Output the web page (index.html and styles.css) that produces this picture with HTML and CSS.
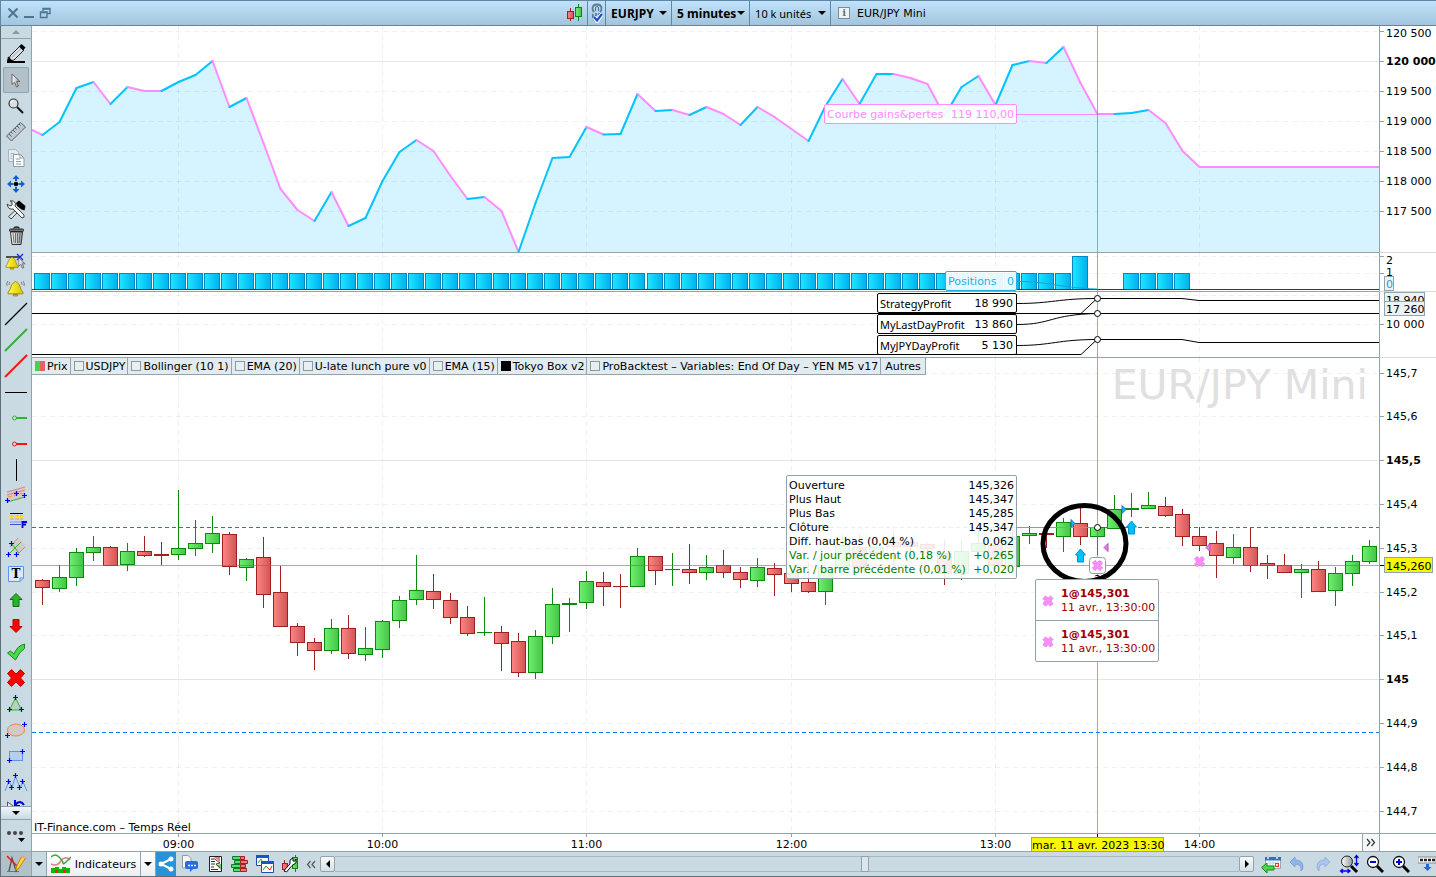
FILE: index.html
```html
<!DOCTYPE html>
<html lang="fr">
<head>
  <meta charset="UTF-8" />
  <title>EUR/JPY Mini - 5 minutes</title>
  <link rel="stylesheet" href="styles.css">
</head>
<body>

<svg class="defs" width="0" height="0">
  <defs>
    <linearGradient id="gUp"><stop offset="0" stop-color="#70f070"/><stop offset="1" stop-color="#44c444"/></linearGradient>
    <linearGradient id="gDown"><stop offset="0" stop-color="#ff8484"/><stop offset="1" stop-color="#d05656"/></linearGradient>
    <linearGradient id="gPos"><stop offset="0" stop-color="#1ee6ff"/><stop offset="1" stop-color="#00b0ee"/></linearGradient>
    <linearGradient id="gGold"><stop offset="0" stop-color="#fff94a"/><stop offset="1" stop-color="#e0c400"/></linearGradient>
    <linearGradient id="gMetal"><stop offset="0" stop-color="#ffffff"/><stop offset="1" stop-color="#8f979b"/></linearGradient>
    <symbol id="cross" viewBox="0 0 12 12"><path d="M3.5.8 6 3 8.5.8l2.7 2.7L9 6l2.2 2.5-2.7 2.7L6 9l-2.5 2.2L.8 8.5 3 6 .8 3.5z" fill="#ff8cff" stroke="#c77fd0" stroke-dasharray="1 1"/></symbol>
    <symbol id="plus" viewBox="0 0 5 5"><path d="M2.5 0v5M0 2.5h5" stroke="#00e" stroke-width="1.2"/></symbol>
    <symbol id="bell" viewBox="0 0 16 16"><path d="M6.5 2.5Q8 0 9.5 2.5C13 4 12 9 15 11.5v1.5H1v-1.5C4 9 3 4 6.5 2.5z" fill="url(#gGold)" stroke="#8f7c10" stroke-width=".8"/><path d="M6 13.5h4v1.5H6z" fill="#e0c000" stroke="#7d6a00" stroke-width=".6"/></symbol>
    <symbol id="pointer" viewBox="0 0 10 15"><path d="M1 1v10.5l2.5-2.3L5.5 14l2-1-2-4.5h3.5z" fill="url(#gMetal)" stroke="#666"/></symbol>
  </defs>
</svg>

<header class="titlebar">
  <div class="window-controls">
    <button aria-label="Fermer"><svg width="12" height="12"><path d="M1.5 1.5l9 9M10.5 1.5l-9 9" /></svg></button>
    <button aria-label="Réduire"><svg width="12" height="12"><path d="M1 10h10" /></svg></button>
    <button aria-label="Restaurer"><svg width="12" height="12"><path class="thin" d="M4 4V1.5h7v5H8.5M1.5 5h6.5v5.5H1.5zM1.5 5.5h6.5M4 2h7" /></svg></button>
  </div>
  <div class="title-tools">
    <button class="tool-candle" aria-label="Style du graphique">
      <svg width="16" height="18"><path d="M3.5 4v13" stroke="#a02020"/><rect x=".5" y="7.5" width="6" height="7" fill="url(#gDown)" stroke="#a02020"/><path d="M11.5 0v17" stroke="#0a8a0a"/><rect x="8.5" y="3.5" width="6" height="9" fill="url(#gUp)" stroke="#0a8a0a"/></svg>
    </button>
    <button class="tool-link" aria-label="Synchroniser">
      <svg width="12" height="20"><path d="M4.5 8V5q0-1.5 1.5-1.5T7.5 5v3" fill="none" stroke="#4d7086"/><path d="M3 9Q1.5 7.5 1.5 5 2 1.5 6 1.5t4.5 3.5Q10.5 7.5 9 9" fill="none" stroke="#5d7c90" stroke-width="1.8"/><path d="M2 11q-1 5 3 7M5 10v3M8 10v2" fill="none" stroke="#5d7c90" stroke-width="1.8"/><path d="M3 14l3 4 5-7" fill="none" stroke="#fff" stroke-width="4"/><path d="M3 14l3 3.5 5-6.5" fill="none" stroke="#1550d8" stroke-width="2.2"/></svg>
    </button>
    <label class="pick pick-symbol"><select aria-label="Instrument"><option>EURJPY</option></select></label>
    <label class="pick pick-period"><select aria-label="Unité de temps"><option>5 minutes</option></select></label>
    <label class="pick pick-units"><select aria-label="Unités"><option>10 k unités</option></select></label>
    <button class="tool-info"><span class="info-icon">i</span>EUR/JPY Mini</button>
  </div>
</header>

<main class="workspace">
  <nav class="sidebar">
    <button class="scroll-up" aria-label="Défiler vers le haut"><svg width="8" height="4"><path d="M0 4 4 0l4 4z" fill="#8d999f"/></svg></button>
    <div class="tools">
      <button aria-label="Crayon"><svg viewBox="0 0 26 26"><path d="M7 15 17 5l4 4-10 10-5 1z" fill="#dce6ea" stroke="#222"/><path d="M9 16.5 18.5 7" stroke="#888" stroke-width=".8"/><path d="M16 5.5 18.5 3l4 3.5L20 9.5z"/><path d="M5 15.5 10 20H4z"/><path d="M4 20h18v2H4z"/></svg></button>
      <button class="active" aria-label="Curseur"><svg viewBox="0 0 26 26"><use href="#pointer" x="8" y="6" width="10" height="15"/></svg></button>
      <button aria-label="Zoom"><svg viewBox="0 0 26 26"><path d="M14 14l6 6" stroke="#111" stroke-width="2"/><circle cx="10.5" cy="10.5" r="4.5" fill="#d5dfe4" stroke="#333" stroke-width="1.2"/><path d="M8 10q.5-2.5 3-2.5" fill="none" stroke="#fff"/></svg></button>
      <button aria-label="Règle"><svg viewBox="0 0 26 26"><path d="M3.5 17 17.5 3.5l5 4.5L8.5 22z" fill="#c0c8d2" stroke="#556069"/><path d="M6 15l2.5 2.5M8 13l1.5 1.5M10 11l2.5 2.5M12 9l1.5 1.5M14 7l2.5 2.5M16 5l1.5 1.5" stroke="#556069"/></svg></button>
      <button aria-label="Copier"><svg viewBox="0 0 26 26"><path d="M5.5 4.5h7l3 3v9h-10z" fill="#e3edf1" stroke="#a5b6bf"/><path d="M7.5 8.5h4M7.5 11h2M7.5 13.5h2" stroke="#a5b6bf"/><path d="M10.5 9.5h7l3.5 3.5v8.5H10.5z" fill="#fff" stroke="#8d9ca4"/><path d="M17 9.5v3.5h4M13 14h4M13 16.5h5M13 19h5" fill="none" stroke="#8d9ca4"/></svg></button>
      <button aria-label="Déplacer"><svg viewBox="0 0 26 26"><circle cx="13" cy="13" r="2.2"/><path d="M13 4l3.5 4H14v2h-2V8H9.5zM13 22l3.5-4H14v-2h-2v2H9.5zM4 13l4-3.5V12h2.5v2H8v2.5zM22 13l-4-3.5V12h-2.5v2H18v2.5z" fill="#1260d0"/></svg></button>
      <button aria-label="Outils"><svg viewBox="0 0 26 26"><path d="M14 12 5.5 19.5l2.5 2.5L16 14z" fill="#dfe5e8" stroke="#444"/><path d="M13 6l3-2.5 6.5 5.5-1 4.5-3-1L14 9z"/><path d="M4 7l3 2 2-1V5L7 4q4-1 5.5 2.5L12 9l9 9q1 3-2 3L10 12q-5 1-6-5z" fill="#f2f4f5" stroke="#444"/></svg></button>
      <button aria-label="Supprimer"><svg viewBox="0 0 26 26"><path d="M7.5 9h12l-1.5 12.5H9z" fill="url(#gMetal)" stroke="#333"/><path d="M10 10l1 10M12.5 10v10M14.5 10v10M17 10l-1 10" stroke="#555" stroke-width=".8"/><rect x="6.5" y="6" width="14" height="2.5" rx="1" fill="#777" stroke="#222"/><path d="M11 5.5q0-1.5 2.5-1.5t2.5 1.5" fill="none" stroke="#222" stroke-width="1.3"/></svg></button>
      <button aria-label="Alerte sur ligne"><svg viewBox="0 0 26 26"><path d="M3 8h14" stroke="#000" stroke-width="1.3"/><use href="#bell" x="2" y="7" width="14" height="14"/><path d="M14 5l6 6M20 5l-6 6" stroke="#22e" stroke-width="1.3"/><use href="#pointer" x="15" y="8" width="8" height="12"/></svg></button>
      <button aria-label="Alertes"><svg viewBox="0 0 26 26"><use href="#bell" x="4" y="5" width="17" height="17"/><path d="M5 6q-2 2-1 5M7 7q-1 1-1 3M20 6q2 2 1 5M18 7q1 1 1 3" fill="none" stroke="#666" stroke-width=".8"/></svg></button>
      <button aria-label="Ligne"><svg viewBox="0 0 26 26"><path d="M2 24 24 2" stroke="#000" stroke-width="1.2"/></svg></button>
      <button aria-label="Ligne verte"><svg viewBox="0 0 26 26"><path d="M2 24 24 2" stroke="#2fb42f" stroke-width="2"/></svg></button>
      <button aria-label="Ligne rouge"><svg viewBox="0 0 26 26"><path d="M2 24 24 2" stroke="#f11" stroke-width="2"/></svg></button>
      <button aria-label="Ligne horizontale"><svg viewBox="0 0 26 26"><path d="M2 13.5h22" stroke="#000"/></svg></button>
      <button aria-label="Segment vert"><svg viewBox="0 0 26 26"><path d="M13 13h11" stroke="#2fb42f" stroke-width="2"/><circle cx="11.5" cy="13" r="2" fill="none" stroke="#2fb42f"/></svg></button>
      <button aria-label="Segment rouge"><svg viewBox="0 0 26 26"><path d="M13 13h11" stroke="#f11" stroke-width="2"/><circle cx="11.5" cy="13" r="2" fill="none" stroke="#f11"/></svg></button>
      <button aria-label="Ligne verticale"><svg viewBox="0 0 26 26"><path d="M13.5 2v22" stroke="#000"/></svg></button>
      <button aria-label="Canal"><svg viewBox="0 0 26 26"><path d="M4 9 22 4v10L4 19z" fill="#d5c9cc"/><path d="M4 9 22 4M4 12l18-5" stroke="#e07f88" fill="none"/><path d="M5 14l16-4" stroke="#ff8c3c" stroke-dasharray="4 2"/><path d="M4 19l18-5" stroke="#2fb42f"/><use href="#plus" x="2" y="15" width="5" height="5"/><use href="#plus" x="11" y="8" width="5" height="5"/><use href="#plus" x="19" y="10" width="5" height="5"/></svg></button>
      <button aria-label="Fibonacci"><svg viewBox="0 0 26 26"><path d="M7 4.5h13" stroke="#000"/><path d="M7 7h13" stroke="#ffd800" stroke-width="2" stroke-dasharray="4 1"/><path d="M7 10h13" stroke="#ff9c3c" stroke-dasharray="4 1"/><path d="M7 13h13" stroke="#9fb6ff" stroke-width="2"/><path d="M7 15.5h11" stroke="#3c50d0"/><path d="M19.5 19v-6H24M19.5 15.5H23" fill="none" stroke="#00c" stroke-width="1.8"/></svg></button>
      <button aria-label="Fourchette"><svg viewBox="0 0 26 26"><path d="M7 12 16 3l7 8-9 9z" fill="#d5c9cc"/><path d="M7 12l8-9M14 20l8-8" stroke="#e07f88"/><path d="M6 19 18 7M9 9l7 9" stroke="#2fb42f"/><use href="#plus" x="6" y="6" width="5" height="5"/><use href="#plus" x="3" y="17" width="5" height="5"/><use href="#plus" x="11" y="17" width="5" height="5"/></svg></button>
      <button class="text-tool" aria-label="Texte"><svg viewBox="0 0 26 26"><path d="M5.5 5.5h15v11.5l-3.5 3.5H5.5z" fill="#dbe8ff" stroke="#5c93f5"/><path d="M17 20.5V17h3.5" fill="none" stroke="#5c93f5"/><text x="13" y="17" text-anchor="middle">T</text></svg></button>
      <button aria-label="Flèche haut"><svg viewBox="0 0 26 26"><path d="M13 6.5l6 6h-3v7h-6v-7H7z" fill="#28b428" stroke="#0b720b"/></svg></button>
      <button aria-label="Flèche bas"><svg viewBox="0 0 26 26"><path d="M13 19.5l6-6h-3v-7h-6v7H7z" fill="#f00" stroke="#b00"/></svg></button>
      <button aria-label="Valider"><svg viewBox="0 0 26 26"><path d="M4.5 14l3-2 3.5 3q3-8 10.5-10v4.5Q16 13 12.5 21z" fill="#4cd64c" stroke="#178a17"/></svg></button>
      <button aria-label="Croix"><svg viewBox="0 0 26 26"><path d="M8.5 4.5 13 9l4.5-4.5 4 4L17.5 13l4 4.5-4 4L13 17l-4.5 4.5-4-4L8.5 13l-4-4.5z" fill="#f00" stroke="#b00"/></svg></button>
      <button aria-label="Triangle"><svg viewBox="0 0 26 26"><path d="M12.5 7l6 12h-12z" fill="#b9d0c4" stroke="#2fb42f"/><use href="#plus" x="10" y="4" width="5" height="5"/><use href="#plus" x="4" y="16" width="5" height="5"/><use href="#plus" x="16" y="16" width="5" height="5"/></svg></button>
      <button aria-label="Ellipse"><svg viewBox="0 0 26 26"><ellipse cx="13" cy="13" rx="8.5" ry="6" fill="#d3cac5" stroke="#ff8040"/><use href="#plus" x="19" y="5" width="5" height="5"/><use href="#plus" x="2" y="16" width="5" height="5"/></svg></button>
      <button aria-label="Rectangle"><svg viewBox="0 0 26 26"><rect x="6.5" y="8.5" width="13" height="9" fill="#b7cfec" stroke="#5c93f5"/><use href="#plus" x="17" y="6" width="5" height="5"/><use href="#plus" x="4" y="15" width="5" height="5"/></svg></button>
      <button aria-label="Vagues"><svg viewBox="0 0 26 26"><path d="M2 22 6 12l3 7 3.5-12L17 19l3-6 4 9" fill="none" stroke="#5c93f5"/><use href="#plus" x="3" y="10" width="5" height="5"/><use href="#plus" x="6" y="16" width="5" height="5"/><use href="#plus" x="10" y="4" width="5" height="5"/><use href="#plus" x="14" y="16" width="5" height="5"/><use href="#plus" x="17" y="10" width="5" height="5"/></svg></button>
      <button aria-label="Annuler dessin"><svg viewBox="0 0 26 26"><path d="M4.5 7v10l7-5z" fill="#eee" stroke="#555"/><path d="M12 5v6h5M12 10q5-6 9 0" fill="none" stroke="#00d" stroke-width="2"/></svg></button>
    </div>
    <button class="scroll-down" aria-label="Défiler vers le bas"><i class="caret"></i></button>
    <button class="more" aria-label="Plus d'outils"><svg width="20" height="14"><circle cx="3" cy="4" r="2"/><circle cx="9" cy="4" r="2"/><circle cx="15" cy="4" r="2"/><path d="M12 9h7l-3.5 4z" fill="#000"/></svg></button>
  </nav>

  <section class="charts">
    <div class="panel panel-equity">
      <svg class="plot" id="equity"></svg>
      <svg class="axis" id="equityAxis"></svg>
      <div class="hint hint-equity"><span>Courbe gains&amp;pertes</span><span>119 110,00</span></div>
    </div>
    <div class="panel panel-positions">
      <svg class="plot" id="positions"></svg>
      <svg class="axis" id="positionsAxis"></svg>
      <div class="hint hint-positions"><span>Positions</span><span>0</span></div>
    </div>
    <div class="panel panel-vars">
      <svg class="plot" id="vars"></svg>
      <svg class="axis" id="varsAxis"></svg>
      <div class="var-hints">
        <div class="hint"><span class="name">StrategyProfit</span><span>18 990</span></div>
        <div class="hint"><span class="name">MyLastDayProfit</span><span>13 860</span></div>
        <div class="hint"><span class="name">MyJPYDayProfit</span><span>5 130</span></div>
      </div>
    </div>
    <div class="panel panel-price">
      <svg class="plot" id="price"></svg>
      <svg class="axis" id="priceAxis"></svg>
      <div class="watermark">EUR/JPY Mini</div>
      <div class="indicators">
        <label><input type="checkbox" class="swatch-price" checked>Prix</label>
        <label><input type="checkbox">USDJPY</label>
        <label><input type="checkbox">Bollinger (10 1)</label>
        <label><input type="checkbox">EMA (20)</label>
        <label><input type="checkbox">U-late lunch pure v0</label>
        <label><input type="checkbox">EMA (15)</label>
        <label><input type="checkbox" checked>Tokyo Box v2</label>
        <label><input type="checkbox">ProBacktest – Variables: End Of Day – YEN M5 v17</label>
        <button>Autres</button>
      </div>
      <table class="bar-info">
        <tr><th>Ouverture</th><td>145,326</td></tr>
        <tr><th>Plus Haut</th><td>145,347</td></tr>
        <tr><th>Plus Bas</th><td>145,285</td></tr>
        <tr><th>Clôture</th><td>145,347</td></tr>
        <tr><th>Diff. haut-bas (0,04 %)</th><td>0,062</td></tr>
        <tr class="gain"><th>Var. / jour précédent (0,18 %)</th><td>+0,265</td></tr>
        <tr class="gain"><th>Var. / barre précédente (0,01 %)</th><td>+0,020</td></tr>
      </table>
      <ul class="orders">
        <li><svg width="12" height="12"><use href="#cross"/></svg><p><b>1@145,301</b><br>11 avr., 13:30:00</p></li>
        <li><svg width="12" height="12"><use href="#cross"/></svg><p><b>1@145,301</b><br>11 avr., 13:30:00</p></li>
      </ul>
      <div class="source">IT-Finance.com – Temps Réel</div>
    </div>
    <div class="panel panel-time">
      <svg class="plot" id="time"></svg>
      <button class="go-end" aria-label="Aller à la fin"><svg width="10" height="9"><path d="M1 1l3 3.5L1 8M5.5 1l3 3.5L5.5 8" fill="none" stroke="#333" stroke-width="1.2"/></svg></button>
      <div class="axis"></div>
      <div class="time-cursor">mar. 11 avr. 2023 13:30</div>
    </div>
  </section>
</main>

<footer class="bottombar">
  <button class="draw-mode" aria-label="Dessin"><svg width="20" height="20"><path d="M1 17.5h12" stroke="#2a2"/><path d="M3 17 6 4l4 13 3-8" fill="none" stroke="#4a5358" stroke-width="1.3"/><path d="M1 2l11 11" stroke="#f11" stroke-width="1.5"/><path d="M9.5 16.5l1-4L16 2l3.5 2-6.5 10z" fill="#ffd84a" stroke="#b98600"/><path d="M15 3l1-1.5 3.5 2L18.5 5z" fill="#f9a0a0"/></svg></button>
  <button class="drop" aria-label="Options de dessin"><i class="caret"></i></button>
  <button class="indicator-btn"><svg width="20" height="20"><path d="M0 10Q6 13 10 7t9-1" fill="none" stroke="#e08080" stroke-width="1.5"/><path d="M0 3Q4-1 8 3t4 6 3-1 5-5" fill="none" stroke="#3aa84a" stroke-width="1.5"/><path d="M0 19v-5h4v-1h4v2h3v-2h4v1h4v5z" fill="#0b0"/><path d="M4 19v-3h3v3zM12 19v-3h3v3z" fill="#e22"/></svg>Indicateurs</button>
  <button class="drop drop-light" aria-label="Options d'indicateurs"><i class="caret"></i></button>
  <button class="share" aria-label="Partager"><svg width="16" height="16"><path d="M13 3 3 8l10 5" fill="none" stroke="#fff" stroke-width="2"/><circle cx="13" cy="3" r="2.5" fill="#fff"/><circle cx="3" cy="8" r="2.5" fill="#fff"/><circle cx="13" cy="13" r="2.5" fill="#fff"/></svg></button>
  <div class="bottom-tools">
    <button aria-label="Messages"><svg width="18" height="18"><path d="M1.5.5H7l3 3V13H1.5z" fill="#f4f7f9" stroke="#8d9ca4"/><path d="M6 6h9q2 0 2 2v4q0 2-2 2h-3l-3 3v-3H6q-2 0-2-2V8q0-2 2-2z" fill="#2a6ae0"/><path d="M7 10.5h2M10 10.5h2M13 10.5h2" stroke="#fff" stroke-width="1.5"/></svg></button>
    <button aria-label="Rapport"><svg width="18" height="18"><path d="M3.5 1.5h12v15h-12z" fill="#fff" stroke="#222"/><path d="M5 4h3M5 6.5h4M5 9h4M5 12h3M5 14.5h7" stroke="#333"/><path d="M8 2h6v5z" fill="#e77"/><path d="M15 9v6l-5-5z" fill="#6c6"/><path d="M8 3.5l6 4.5-4 1 4 4" fill="none" stroke="#444"/></svg></button>
    <button aria-label="Carnet"><svg width="18" height="18"><path d="M1.5 1.5h8v3h-8zM3.5 5.5h6v3h-6zM.5 9.5h9v3h-9zM2.5 13.5h7v3h-7z" fill="#4fe070" stroke="#137a2a"/><path d="M9.5 1.5h4v3h-4zM9.5 5.5h7v3h-7zM9.5 9.5h5v3h-5zM9.5 13.5h6v3h-6z" fill="#ef7777" stroke="#a02020"/></svg></button>
    <button aria-label="Fenêtres"><svg width="18" height="18"><path d="M.5.5h12v10H.5z" fill="#fff" stroke="#1a4fb0"/><path d="M0 0h13v3H0z" fill="#1a55c8"/><path d="M2 8l3-4 2 4" fill="none" stroke="#2a2"/><path d="M5.5 6.5h12v11h-12z" fill="#fff" stroke="#1a4fb0"/><path d="M5 6h13v3H5z" fill="#1a55c8"/><path d="M7 15l3-4 2 2" fill="none" stroke="#2a2"/><path d="M12 13l2 2 2-4" fill="none" stroke="#e22"/></svg></button>
    <button aria-label="Réglages du graphique"><svg width="18" height="18"><path d="M3.5 5v12" stroke="#a02020"/><path d="M14.5 0v17" stroke="#0a8a0a"/><rect x="1.5" y="8.5" width="5" height="6" fill="url(#gDown)" stroke="#a02020"/><rect x="11.5" y="2.5" width="5" height="11" fill="url(#gUp)" stroke="#0a8a0a"/><path d="M3 15.5 9 9V5l3-2v3h2l1-2v4l-4 2.5L5.5 17z" fill="#fff" stroke="#111"/></svg></button>
    <button class="collapse" aria-label="Replier"><svg width="10" height="9"><path d="M4.5 1 1.5 4.5l3 3.5M9 1 6 4.5 9 8" fill="none" stroke="#555" stroke-width="1.2"/></svg></button>
  </div>
  <div class="scrollbar">
    <button aria-label="Reculer"><svg width="4" height="8"><path d="M4 0v8L0 4z"/></svg></button>
    <input type="range" min="0" max="1000" value="587" aria-label="Position dans l'historique">
    <button aria-label="Avancer"><svg width="4" height="8"><path d="M0 0v8l4-4z"/></svg></button>
  </div>
  <div class="zoom-tools">
    <button aria-label="Date"><svg width="20" height="20"><path d="M4.5 4.5h15v10h-15z" fill="#fff" stroke="#9aa"/><path d="M4 3h16v3.5H4z" fill="#2878b8"/><path d="M7 1v4M16 1v4" stroke="#ccc" stroke-width="2"/><path d="M7 9h11M7 12h11M9 7v7M12 7v7M17 7v7" stroke="#ccd"/><rect x="14.5" y="9.5" width="3" height="3" fill="none" stroke="#e33"/><path d="M.5 13.5 6 9v3h7v4H6v3z" fill="#4cd64c" stroke="#178a17"/></svg></button>
    <button aria-label="Annuler"><svg width="16" height="16"><path d="M1 6l5-5v3q8 0 8 7 0 2-2 4 1-7-6-7v3z" fill="#8fb6ea" stroke="#7da3d8"/></svg></button>
    <button aria-label="Rétablir"><svg width="16" height="16"><path d="M15 6l-5-5v3Q2 4 2 11q0 2 2 4-1-7 6-7v3z" fill="#a9c6ee" stroke="#93b2de"/></svg></button>
    <button aria-label="Zoom auto"><svg width="20" height="20"><path d="M12 12l6 6" stroke="#000" stroke-width="3"/><circle cx="8" cy="7.5" r="5.5" fill="url(#gMetal)" stroke="#222"/><path d="M17.5 2v8M15.5 4l2-2.5 2 2.5M15.5 9l2 2.5 2-2.5M2 17h8M4 15l-2.5 2L4 19M8.5 15l2.5 2-2.5 2" fill="none" stroke="#00e" stroke-width="1.3"/></svg></button>
    <button aria-label="Zoom arrière"><svg width="18" height="18"><path d="M11 11l6 6" stroke="#000" stroke-width="3"/><circle cx="7" cy="7" r="5.5" fill="#fff" stroke="#111" stroke-width="1.3"/><path d="M4 7h6" stroke="#00d" stroke-width="2"/></svg></button>
    <button aria-label="Zoom avant"><svg width="18" height="18"><path d="M11 11l6 6" stroke="#000" stroke-width="3"/><circle cx="7" cy="7" r="5.5" fill="#fff" stroke="#111" stroke-width="1.3"/><path d="M4 7h6M7 4v6" stroke="#00d" stroke-width="2"/></svg></button>
    <button aria-label="Espacement"><svg width="18" height="16"><path d="M0 1h18v6H0z" fill="#fff" stroke="#888"/><path d="M2 4h16" stroke="#222" stroke-width="2.5" stroke-dasharray="3 1"/><path d="M8 8h3v3h2.5l-4 4-4-4H8z" fill="#2468d8"/></svg></button>
  </div>
</footer>

<script src="script.js"></script>
</body>
</html>
```

FILE: styles.css
```css
* {
  box-sizing: border-box;
}

body {
  display: flex;
  flex-direction: column;
  height: 100vh;
  margin: 0;
  overflow: hidden;
  background: #fff;
  color: #000;
  font-family: "DejaVu Sans", Verdana, sans-serif;
  font-size: 11px;
}

button, select, input {
  margin: 0;
  padding: 0;
  border: 0;
  background: none;
  color: inherit;
  font: inherit;
}

button {
  display: flex;
  align-items: center;
  justify-content: center;
}

svg {
  display: block;
  flex: none;
}

.defs {
  position: absolute;
}

.caret {
  border: 4px solid transparent;
  border-top-color: #000;
  border-bottom: 0;
}

/* title bar */
.titlebar {
  display: flex;
  flex: none;
  height: 26px;
  border: 1px solid #5d87a3;
  border-right: 0;
  background: linear-gradient(#c0e2fc, #a2c5dd);
}

.window-controls {
  display: flex;
  align-items: center;
  gap: 4px;
  padding-left: 6px;
}

.window-controls path {
  fill: none;
  stroke: #4d7690;
  stroke-width: 2;
}

.window-controls .thin {
  stroke-width: 1.4;
}

.title-tools {
  display: flex;
  margin: 0 auto;
  padding-left: 8px;
}

.title-tools > * {
  flex: none;
  border-right: 1px solid #5d87a3;
}

.tool-candle {
  width: 26px;
}

.tool-link {
  width: 18px;
}

.pick {
  display: flex;
  align-items: center;
  justify-content: space-between;
  padding: 0 4px 0 5px;
}

.pick select {
  appearance: none;
}

.pick::after {
  content: "";
  border: 4px solid transparent;
  border-top-color: #000;
  border-bottom: 0;
}

.pick-symbol { width: 66px; }
.pick-period { width: 78px; }
.pick-units { width: 81px; }

.pick-symbol, .pick-period {
  font-family: "Noto Sans", sans-serif;
  font-size: 12px;
  font-weight: bold;
}

.title-tools .tool-info {
  gap: 7px;
  padding: 0 7px;
  border: 0;
}

.info-icon {
  width: 12px;
  height: 12px;
  border: 1px solid #7d8d96;
  background: #eef3f6;
  color: #65747c;
  font: bold 10px/10px "DejaVu Serif", serif;
}

/* narrower face where the box is tight */
.pick-units,
.var-hints .name {
  font-family: "Noto Sans", "DejaVu Sans", sans-serif;
}

/* drawing tools */
.workspace {
  display: flex;
  flex: 1;
  min-height: 0;
}

.sidebar {
  display: flex;
  flex: none;
  flex-direction: column;
  width: 32px;
  border-right: 1px solid #93a3ab;
  border-left: 1px solid #5d6f78;
  background: #c9dae3;
}

.scroll-up {
  flex: none;
  height: 13px;
  border-bottom: 1px solid #93a3ab;
}

.tools {
  flex: 1;
  min-height: 0;
  padding: 2px;
  overflow: hidden;
}

.tools button {
  width: 26px;
  height: 26px;
  border-radius: 2px;
}

.tools svg {
  width: 26px;
  height: 26px;
}

.tools .active {
  background: #b2c1c9;
  box-shadow: inset 0 0 0 1px #93a3ab;
}

.text-tool text {
  font: bold 12px "DejaVu Serif", serif;
}

.scroll-down {
  flex: none;
  height: 14px;
  border: solid #93a3ab;
  border-width: 1px 0;
  background: linear-gradient(#eef5f9, #c9dae3);
}

.more {
  flex: none;
  height: 31px;
  fill: #444;
}

/* chart panels */
.charts {
  display: flex;
  flex: 1;
  flex-direction: column;
  min-width: 0;
}

.panel {
  position: relative;
  display: flex;
  flex: none;
}

.plot {
  flex: 1;
  width: 0;
  height: 100%;
  border-bottom: 1px solid #93a3ab;
}

.axis {
  flex: none;
  width: 57px;
  height: 100%;
  border-bottom: 1px solid #d6dadc;
  border-left: 1px solid #93a3ab;
}

.panel-equity { height: 227px; }
.panel-positions { height: 39px; }
.panel-vars { height: 66px; }

.panel-price {
  flex: 1;
  min-height: 0;
}

.panel-time {
  height: 18px;
  border-top: 1px solid #93a3ab;
}

.panel-price .plot,
.panel-price .axis,
.panel-time .plot,
.panel-time .axis {
  border-bottom: 0;
}

.plot text, .axis text {
  font-size: 11px;
}

.axis .strong {
  font-weight: bold;
}

.grid { stroke: rgba(0, 0, 0, .06); stroke-dasharray: 5 4; }
.grid-main { stroke: rgba(0, 0, 0, .1); }
.tick { stroke: #93a3ab; }
.rise { stroke: #00c3ff; stroke-width: 2; stroke-linecap: round; }
.fall { stroke: #ff8cff; stroke-width: 2; stroke-linecap: round; }
.area { fill: #d5f4ff; }
.var-line { fill: none; stroke: #000; }
.handle { fill: #fff; stroke: #000; }
.cross { stroke: rgba(240, 60, 60, .6); }
.day-level { stroke: #0a7dff; stroke-dasharray: 4 3; }
.tag { fill: #edf2f4; stroke: #93a3ab; }
.tag-price { fill: #f7f700; stroke: #93a3ab; }

.hint {
  display: flex;
  justify-content: space-between;
  height: 20px;
  padding: 0 3px 0 2px;
  border: 1px solid #000;
  border-radius: 2px;
  background: #fff;
  line-height: 19px;
  white-space: nowrap;
}

.hint-equity,
.hint-positions,
.var-hints {
  position: absolute;
  right: 419px;
}

.hint-equity {
  top: 78px;
  width: 193px;
  padding: 0 2px;
  border-color: #ff8cff;
  background: rgba(255, 255, 255, .9);
  color: #ff8cff;
}

.hint-positions {
  top: 18px;
  width: 72px;
  padding: 0 2px;
  border-color: #1fb0e6;
  background: rgba(255, 255, 255, .9);
  color: #1fb0e6;
}

.var-hints {
  top: 1px;
  display: flex;
  flex-direction: column;
  gap: 1px;
  width: 140px;
}

.watermark {
  position: absolute;
  top: 4px;
  right: 68px;
  color: #e0e0e0;
  font-size: 41px;
  line-height: 46px;
}

.indicators {
  position: absolute;
  top: 0;
  left: 0;
  display: flex;
  height: 17px;
  border-bottom: 1px solid #93a3ab;
  background: #e2ebef;
  white-space: nowrap;
}

.indicators label,
.indicators button {
  display: flex;
  align-items: center;
  gap: 2px;
  padding: 0 2px 0 3px;
  border-right: 1px solid #93a3ab;
}

.indicators button {
  padding: 0 4px;
}

.indicators input {
  appearance: none;
  width: 10px;
  height: 10px;
  border: 1px solid #8d9999;
  background: #e8eff2;
}

.indicators input:checked {
  border-color: #000;
  background: #000;
}

.indicators .swatch-price:checked {
  border: 0;
  background: linear-gradient(90deg, #4cd04c 50%, #e06464 50%);
}

.bar-info {
  position: absolute;
  top: 117px;
  right: 419px;
  width: 231px;
  padding: 3px 1px 1px;
  border: 1px solid #93a3ab;
  border-radius: 2px;
  border-spacing: 0;
  background: rgba(255, 255, 255, .88);
  line-height: 14px;
  white-space: nowrap;
}

.bar-info th {
  padding: 0 1px;
  font-weight: normal;
  text-align: left;
}

.bar-info td {
  padding: 0 1px;
  text-align: right;
}

.bar-info .gain {
  color: #007d00;
}

.orders {
  position: absolute;
  top: 221px;
  right: 277px;
  width: 124px;
  margin: 0;
  padding: 0;
  border: 1px solid #93a3ab;
  border-radius: 2px;
  background: #fff;
  color: #a00000;
  line-height: 14px;
  list-style: none;
  white-space: nowrap;
}

.orders li {
  display: flex;
  align-items: center;
  gap: 7px;
  height: 40px;
  padding: 1px 0 0 6px;
}

.orders li + li {
  height: 41px;
  border-top: 1px solid #93a3ab;
}

.orders p {
  margin: 0;
}

.source {
  position: absolute;
  bottom: 0;
  left: 2px;
  line-height: 11px;
}

.go-end {
  width: 17px;
  border-left: 1px solid #93a3ab;
  background: #f4f6f7;
}

.time-cursor {
  position: absolute;
  top: 3px;
  left: 999px;
  width: 133px;
  height: 14px;
  border: 1px solid #93a3ab;
  border-bottom: 0;
  background: #f7f700;
  line-height: 15px;
  text-align: center;
  white-space: nowrap;
}

/* bottom bar */
.bottombar {
  display: flex;
  flex: none;
  height: 26px;
  border: solid #5d6f78;
  border-width: 1px 0 1px 1px;
  border-top-color: #93a3ab;
  background: #c9dae3;
}

.bottombar > * {
  flex: none;
}

.draw-mode {
  width: 31px;
  border-right: 1px solid #93a3ab;
  background: #b2c1c9;
}

.drop {
  width: 15px;
  border-right: 1px solid #93a3ab;
}

.indicator-btn {
  gap: 4px;
  width: 94px;
  border-right: 1px solid #93a3ab;
}

.indicator-btn, .drop-light {
  background: linear-gradient(#fff, #ebeff1);
}

.share {
  width: 20px;
  background: #2a93d8;
}

.bottom-tools {
  display: flex;
  gap: 7px;
  padding: 0 4px 0 5px;
}

.bottombar .scrollbar {
  display: flex;
  flex: 1;
  align-items: center;
  min-width: 0;
}

.scrollbar button {
  flex: none;
  width: 15px;
  height: 16px;
  border: 1px solid #93a3ab;
  border-radius: 2px;
  background: linear-gradient(#f6fafc, #d3e1e8);
}

.scrollbar input {
  appearance: none;
  flex: 1;
  min-width: 0;
  height: 16px;
  border: solid #a9b9c1;
  border-width: 1px 0;
}

.scrollbar input::-webkit-slider-thumb {
  appearance: none;
  width: 8px;
  height: 16px;
  border: 1px solid #93a3ab;
  background: #dbe7ed;
}

.zoom-tools {
  display: flex;
  align-items: center;
  width: 182px;
  padding-left: 4px;
  overflow: hidden;
}

.zoom-tools button {
  flex: none;
  width: 26px;
}
```

FILE: script.js
```javascript
const NS = "http://www.w3.org/2000/svg";
const BAR = 17.017;
const FIRST_X = 42.5;
const CURSOR_X = 1097.5;
const RIGHT = 4000;
const HOURS = ["09:00", "10:00", "11:00", "12:00", "13:00", "14:00"];

const equity = [
  135, 122, 88, 82, 104, 87, 91, 91, 82, 75, 61, 107, 98, 143, 189, 210, 221, 192, 226, 218,
  181, 152, 140, 151, 176, 199, 197, 211, 252, 203, 158, 157, 127, 134.5, 134, 94, 111, 110,
  115, 107, 114, 125, 107, 117, 129, 141, 106, 79, 104, 74, 74, 78, 84, 116, 87, 76, 105, 65,
  61, 63, 47, 83, 114, 114, 113, 110, 123, 151, 167
];

// direction, body top, body bottom, wick top, wick bottom
const candles = [
  "r 580 587 579 605", "g 577 588 565 592", "g 552 577 548 586", "g 547 552 536 561",
  "r 547 565 546 566", "g 551 564 543 571", "r 551 555 536 557", "r 554 555 542 565",
  "g 548 554 490 560", "g 543 548 520 556", "g 533 543 516 553", "r 534 566 532 575",
  "g 559 567 558 581", "r 557 594 537 608", "r 592 626 566 626", "r 626 642 623 656",
  "r 642 650 638 670", "g 628 650 619 654", "r 628 653 615 659", "g 648 654 627 661",
  "g 621 649 620 658", "g 600 620 596 628", "g 590 599 555 605", "r 591 599 574 609",
  "r 600 617 593 624", "r 617 633 606 636", "g 632 632 597 636", "r 632 643 626 671",
  "r 641 672 633 677", "g 636 672 630 679", "g 604 636 588 644", "g 603 604 598 632",
  "g 581 602 571 609", "r 582 586 572 606", "r 586 586 574 608", "g 556 586 548 586",
  "r 556 570 556 585", "g 569 569 553 586", "r 569 572 544 584", "g 567 572 555 580",
  "r 565 572 550 578", "r 572 579 567 588", "g 567 580 558 587", "r 568 574 563 596",
  "r 573 583 573 592", "r 582 591 562 593", "g 567 591 567 605", "g 545 568 535 575",
  "r 547 566 534 570", "g 547 552 540 560", "r 542 546 531 565", "r 542 546 538 556",
  "r 544 548 543 560", "r 553 573 540 585", "g 551 573 540 580", "g 543 551 530 560",
  "r 545 565 540 570", "g 536 566 530 567", "g 533 535 526 544", "r 533 534 533 548",
  "g 522 536 518 552", "r 523 536 507 545", "g 527 536 527 555", "g 509 528 495 529",
  "g 508 509 493 517", "g 505 508 492 509", "r 506 515 497 517", "r 514 536 509 546",
  "r 536 545 527 551", "r 543 555 531 578", "g 547 557 534 564", "r 547 565 528 572",
  "r 563 565 555 579", "r 565 572 554 573", "g 569 572 564 598", "r 569 591 561 592",
  "g 573 590 567 606", "g 561 573 555 586", "g 546 561 540 564"
];

function el(parent, name, attrs, text) {
  const node = document.createElementNS(NS, name);
  for (const key in attrs) node.setAttribute(key, attrs[key]);
  if (text !== undefined) node.textContent = text;
  parent.appendChild(node);
  return node;
}

function line(parent, cls, x1, y1, x2, y2) {
  return el(parent, "line", { class: cls, x1, y1, x2, y2 });
}

function barX(i) {
  return Math.round(FIRST_X + i * BAR - 0.6) + 0.5;
}

// every panel draws in window coordinates, shifted by its own origin
function layer(id, left, top) {
  return el(document.getElementById(id), "g", { transform: `translate(${-left},${-top})` });
}

function grid(g, top, bottom, rows, solid) {
  rows.forEach(y => line(g, solid.includes(y) ? "grid-main" : "grid", 32, y + 0.5, RIGHT, y + 0.5));
  HOURS.forEach((h, k) => {
    const x = barX(8 + k * 12);
    line(g, "grid", x, top, x, bottom);
  });
}

function axis(id, top, labels) {
  const g = layer(id, 1380, top);
  labels.forEach(([y, text, strong, labelY]) => {
    line(g, "tick", 1380, y + 0.5, 1384, y + 0.5);
    el(g, "text", { class: strong ? "strong" : "", x: 1386, y: (labelY || y) + 4 }, text);
  });
  return g;
}

function tag(g, cls, y, width, height, text, color) {
  el(g, "rect", { class: cls, x: 1384.5, y: y + 0.5, width, height });
  el(g, "text", { x: 1386, y: y + height - 2, fill: color || "#000" }, text);
}

function drawEquity() {
  const g = layer("equity", 32, 26);
  const pts = [[32, 130]].concat(equity.map((y, i) => [barX(i), y]));
  pts.push([RIGHT, 167]);
  el(g, "path", { class: "area", d: "M32 252L" + pts.map(p => p.join(" ")).join("L") + "V252z" });
  grid(g, 26, 252, [31, 61, 91, 121, 151, 181, 211], [61]);
  let cls = "fall";
  for (let i = 1; i < pts.length; i++) {
    const [x1, y1] = pts[i - 1];
    const [x2, y2] = pts[i];
    if (y2 < y1) cls = "rise";
    if (y2 > y1) cls = "fall";
    line(g, cls, x1, y1, x2, y2);
  }
  el(g, "line", { x1: 1017, y1: 114.5, x2: CURSOR_X, y2: 114.5, stroke: "#ff8cff" });
  line(g, "cross", CURSOR_X, 26, CURSOR_X, 252);
  axis("equityAxis", 26, [
    [31, "120 500", false, 33], [61, "120 000", true], [91, "119 500"], [121, "119 000"],
    [151, "118 500"], [181, "118 000"], [211, "117 500"]
  ]);
}

function drawPositions() {
  const g = layer("positions", 32, 253);
  grid(g, 253, 291, [256, 273], []);
  for (let i = 0; i < 68; i++) {
    if (i === 62 || i === 63) continue;
    const y = i === 61 ? 256.5 : 273.5;
    el(g, "rect", { x: barX(i) - 8, y, width: 15, height: 289.5 - y, fill: "url(#gPos)", stroke: "#0088c0" });
  }
  line(g, "", 32, 289.5, RIGHT, 289.5).setAttribute("stroke", "#1c2fc0");
  el(g, "path", { d: "M1017 281.5C1050 281.5 1060 288 1097 289", fill: "none", stroke: "#0aa5e0" });
  line(g, "cross", CURSOR_X, 253, CURSOR_X, 291);
  const a = axis("positionsAxis", 253, [[256, "2", false, 260], [273, "1", false, 272]]);
  tag(a, "tag", 276, 9, 14, "0", "#0aa5e0");
}

function drawVars() {
  const g = layer("vars", 32, 292);
  grid(g, 292, 357, [295, 324], []);
  const paths = [
    `M32 313.5H${RIGHT}`,
    `M1081 313.5L1097 298.5H1182L1199 300.5H${RIGHT}`,
    `M32 354.5H1081L1097 339.5H1182L1199 342.5H${RIGHT}`,
    "M1017 303.5C1052 303.5 1058 298.5 1097 298.5",
    "M1017 324.5C1052 324.5 1050 314.5 1097 313.5",
    "M1017 345.5C1052 345.5 1058 339.5 1097 339.5"
  ];
  paths.forEach(d => el(g, "path", { class: "var-line", d }));
  line(g, "cross", CURSOR_X, 292, CURSOR_X, 357);
  [298.5, 313.5, 339.5].forEach(cy => el(g, "circle", { class: "handle", cx: CURSOR_X, cy, r: 3 }));
  const a = axis("varsAxis", 292, [[324, "10 000"]]);
  tag(a, "tag", 292, 40, 14, "18 940");
  tag(a, "tag", 301, 40, 14, "17 260");
}

function arrowUp(g, x, y) {
  el(g, "path", { d: `M${x} ${y}l5 6h-2v7h-6v-7h-2z`, fill: "#00bfff", stroke: "#0090d0" });
}

function drawPrice() {
  const g = layer("price", 32, 358);
  grid(g, 358, 833, [373, 416, 460, 504, 548, 592, 635, 679, 723, 767, 811], [460, 679]);
  line(g, "day-level", 32, 527.5, RIGHT, 527.5);
  line(g, "day-level", 32, 732.5, RIGHT, 732.5);

  candles.forEach((row, i) => {
    const [dir, top, bottom, high, low] = row.split(" ").map((v, n) => n ? +v : v);
    const x = barX(i);
    const stroke = dir === "g" ? "#0a8a0a" : "#a02020";
    el(g, "line", { x1: x, y1: high, x2: x, y2: low, stroke });
    el(g, "rect", {
      x: x - 7, y: top + 0.5, width: 14, height: Math.max(bottom - top, 0.1),
      fill: dir === "g" ? "url(#gUp)" : "url(#gDown)", stroke
    });
  });

  line(g, "cross", 32, 565.5, RIGHT, 565.5);
  el(g, "line", { x1: 1017, y1: 527.5, x2: CURSOR_X, y2: 527.5, stroke: "#8d9ca4" });
  line(g, "cross", CURSOR_X, 358, CURSOR_X, 833);

  // entries and exits
  el(g, "path", { d: "M1071 519.5l4 4-4 4zM1122 505.5l4 4-4 4z", fill: "#19b8f5", stroke: "#0a80b8" });
  el(g, "path", { d: "M1108 543.5l-4 4 4 4zM1210 543.5l-4 4 4 4z", fill: "#ee7cee", stroke: "#b050b8" });
  arrowUp(g, 1080.5, 549);
  arrowUp(g, 1131.5, 521);
  el(g, "text", { x: 1097.5, y: 583, "text-anchor": "middle" }, "2");
  el(g, "ellipse", { cx: 1084.5, cy: 543.5, rx: 41.5, ry: 38, fill: "none", stroke: "#000", "stroke-width": 5 });
  el(g, "rect", { x: 1089.5, y: 557.5, width: 16, height: 16, rx: 3, fill: "#fff", stroke: "#8d9ca4" });
  el(g, "use", { href: "#cross", x: 1091.5, y: 559.5, width: 12, height: 12 });
  el(g, "use", { href: "#cross", x: 1193.5, y: 555.5, width: 12, height: 12 });
  el(g, "circle", { class: "handle", cx: CURSOR_X, cy: 527.5, r: 3 });

  const a = axis("priceAxis", 358, [
    [373, "145,7"], [416, "145,6"], [460, "145,5", true], [504, "145,4"], [548, "145,3"],
    [592, "145,2"], [635, "145,1"], [679, "145", true], [723, "144,9"], [767, "144,8"], [811, "144,7"]
  ]);
  line(a, "", 1380, 565.5, 1384, 565.5).setAttribute("stroke", "#000");
  tag(a, "tag-price", 557, 48, 15, "145,260");
}

function drawTime() {
  const g = layer("time", 32, 834);
  HOURS.forEach((text, k) => {
    const x = barX(8 + k * 12);
    line(g, "tick", x, 834, x, 837);
    el(g, "text", { x, y: 848, "text-anchor": "middle" }, text);
  });
  el(g, "line", { x1: CURSOR_X, y1: 834, x2: CURSOR_X, y2: 837, stroke: "#000" });
}

drawEquity();
drawPositions();
drawVars();
drawPrice();
drawTime();
```
